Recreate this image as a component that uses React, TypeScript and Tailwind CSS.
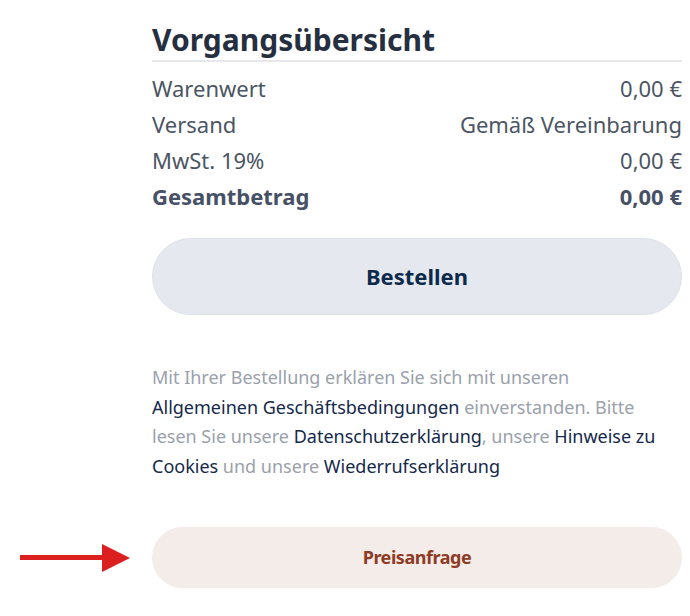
export default function App() {
  const rows = [
    { label: "Warenwert", value: "0,00 €" },
    { label: "Versand", value: "Gemäß Vereinbarung" },
    { label: "MwSt. 19%", value: "0,00 €" },
  ];

  return (
    <div className="relative w-[690px] h-[616px] bg-white font-['Noto_Sans',sans-serif] overflow-hidden">
      {/* Summary */}
      <div className="ml-[152px] w-[530px] pt-[20px]">
        <h2 className="text-[30px] leading-[40px] font-bold text-[#252f3f] border-b-2 border-[#e6e8eb]">
          Vorgangsübersicht
        </h2>

        <div className="mt-[8px] text-[22px] leading-[36px] text-[#4b5563]">
          {rows.map((r) => (
            <div key={r.label} className="flex justify-between">
              <span>{r.label}</span>
              <span>{r.value}</span>
            </div>
          ))}
          <div className="flex justify-between font-bold text-[#475166]">
            <span>Gesamtbetrag</span>
            <span>0,00 €</span>
          </div>
        </div>

        <button className="mt-[24px] w-full h-[77px] rounded-full bg-[#e5e9ef] border border-[#dde2e8] text-[22px] font-bold text-[#0d2a4c]">
          Bestellen
        </button>

        <p className="mt-[48px] pr-[8px] text-[18px] leading-[29.5px] text-[#9aa1ab]">
          Mit Ihrer Bestellung erklären Sie sich mit unseren{" "}
          <a className="text-[#15294a] whitespace-nowrap">Allgemeinen Geschäftsbedingungen</a> einverstanden. Bitte
          lesen Sie unsere <a className="text-[#15294a]">Datenschutzerklärung</a>, unsere{" "}
          <a className="text-[#15294a]">Hinweise zu Cookies</a> und unsere{" "}
          <a className="text-[#15294a]">Wiederrufserklärung</a>
        </p>

        <button className="mt-[46px] w-full h-[61px] rounded-full bg-[#f3ece9] text-[18px] font-bold tracking-tight text-[#8e3b25]">
          Preisanfrage
        </button>
      </div>

      {/* Annotation arrow */}
      <svg className="absolute left-[18px] top-[542px]" width="114" height="32" viewBox="0 0 114 32">
        <rect x="2" y="13" width="84" height="5" fill="#dc1f1f" />
        <polygon points="84,2 112,16 84,30" fill="#dc1f1f" />
      </svg>
    </div>
  );
}
